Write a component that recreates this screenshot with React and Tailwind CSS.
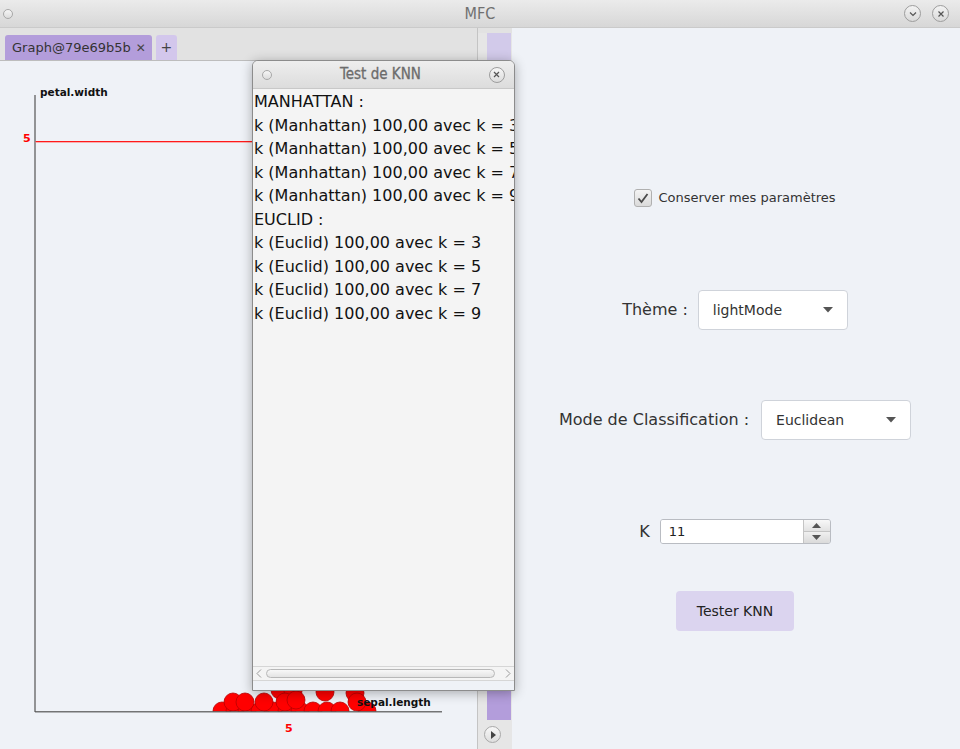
import React from 'react';

const circles = [
  [222, 711], [235, 711], [247, 711], [260, 711], [273, 711], [287, 711], [300, 711],
  [313, 711], [327, 711], [340, 711], [367, 711],
  [280, 690], [293, 691], [325, 692], [355, 693],
  [233, 702], [245, 702], [264, 702], [285, 702], [296, 700], [357, 702],
];

const lines = [
  'MANHATTAN :',
  'k (Manhattan) 100,00 avec k = 3',
  'k (Manhattan) 100,00 avec k = 5',
  'k (Manhattan) 100,00 avec k = 7',
  'k (Manhattan) 100,00 avec k = 9',
  'EUCLID :',
  'k (Euclid) 100,00 avec k = 3',
  'k (Euclid) 100,00 avec k = 5',
  'k (Euclid) 100,00 avec k = 7',
  'k (Euclid) 100,00 avec k = 9',
];

function Graph() {
  // canvas drawn in page coordinates, shifted up by the header height
  return (
    <svg width="477" height="688" className="block">
      <defs>
        <clipPath id="plot">
          <rect x="0" y="0" width="477" height="711.5" />
        </clipPath>
      </defs>
      <g transform="translate(0,-61)" fontFamily="DejaVu Sans, sans-serif">
        <rect x="34.4" y="95" width="1.2" height="617" fill="#555" />
        <text x="40" y="96" fontSize="10.5" fontWeight="bold" fill="#111">petal.width</text>
        <text x="23" y="142" fontSize="11" fontWeight="bold" fill="#ff0000">5</text>
        <rect x="35.6" y="141" width="225" height="1" fill="#ff1a1a" />
        <rect x="35.6" y="142" width="225" height="0.6" fill="#ff8080" />
        <g clipPath="url(#plot)">
          {circles.map(([cx, cy], i) => (
            <circle key={i} cx={cx} cy={cy} r="9" fill="#ff0000" stroke="#b80000" strokeWidth="0.8" />
          ))}
        </g>
        <rect x="35" y="711.2" width="407" height="1.2" fill="#555" />
        <text x="357" y="706" fontSize="10.5" fontWeight="bold" fill="#111">sepal.length</text>
        <text x="285" y="732" fontSize="11" fontWeight="bold" fill="#ff0000">5</text>
      </g>
    </svg>
  );
}

function Caret() {
  return (
    <svg width="10" height="6" viewBox="0 0 10 6">
      <path d="M0 0 L10 0 L5 5.5 Z" fill="#555" />
    </svg>
  );
}

function Select({ value }) {
  return (
    <div className="w-[150px] h-[40px] bg-white border border-[#cfd3da] rounded-[4px] flex items-center justify-between pl-[14px] pr-[14px]">
      <span className="text-[14px] text-[#333]">{value}</span>
      <Caret />
    </div>
  );
}

export default function App() {
  return (
    <div className="w-[960px] h-[749px] relative overflow-hidden bg-[#eff2f7] font-['DejaVu_Sans',sans-serif] text-[#333]">
      {/* window title bar */}
      <div className="h-[28px] flex items-center bg-gradient-to-b from-[#ebebeb] to-[#d7d7d7] border-b border-[#cacaca]">
        <div className="w-[80px] pl-[3px] flex items-center">
          <span className="w-[10px] h-[10px] rounded-full border border-[#a8a8a8] bg-gradient-to-b from-[#f6f6f6] to-[#dcdcdc]" />
        </div>
        <div className="flex-1 text-center text-[16px] text-[#707070] font-['DejaVu_Sans_Condensed','DejaVu_Sans',sans-serif] [font-stretch:condensed] leading-none">MFC</div>
        <div className="w-[80px] pr-[11px] flex items-center justify-end gap-[11px]">
          <span className="w-[17px] h-[17px] rounded-full border border-[#9d9d9d] bg-gradient-to-b from-[#f3f3f3] to-[#dadada] flex items-center justify-center">
            <svg width="8" height="6" viewBox="0 0 8 6"><path d="M1 1.5 L4 4.5 L7 1.5" fill="none" stroke="#555" strokeWidth="1.2" /></svg>
          </span>
          <span className="w-[17px] h-[17px] rounded-full border border-[#9d9d9d] bg-gradient-to-b from-[#f3f3f3] to-[#dadada] flex items-center justify-center">
            <svg width="8" height="8" viewBox="0 0 8 8"><path d="M1.5 1.5 L6.5 6.5 M6.5 1.5 L1.5 6.5" fill="none" stroke="#555" strokeWidth="1.2" /></svg>
          </span>
        </div>
      </div>

      <div className="flex h-[721px]">
        {/* left pane with tabs */}
        <div className="w-[477px] flex flex-col">
          <div className="h-[33px] bg-[#e2e2e2] border-b border-[#bdbdbd] flex items-end pl-[5px] gap-[4px]">
            <div className="h-[25px] pl-[7px] pr-[6px] bg-[#b39ddb] rounded-t-[3px] flex items-center gap-[5px] text-[13px] text-[#333]">
              <span>Graph@79e69b5b</span>
              <span className="text-[12px] text-[#444]">✕</span>
            </div>
            <div className="h-[25px] w-[21px] bg-[#d3c7ec] rounded-t-[3px] flex items-center justify-center text-[14px] text-[#444]">+</div>
          </div>
          <div className="flex-1 overflow-hidden">
            <Graph />
          </div>
        </div>

        {/* scroll strip */}
        <div className="w-[35px] border-l border-[#c4c4c4] bg-[#e6e6e6] flex flex-col">
          <div className="h-[5px] bg-[#e2e2e2]" />
          <div className="ml-[9px] w-[24px] h-[28px] bg-[#d2caea]" />
          <div className="ml-[9px] w-[24px] h-[659px] bg-[#b39ddb]" />
          <div className="flex-1 flex items-center justify-center pr-[5px]">
            <span className="w-[17px] h-[17px] rounded-full border border-[#a9a9a9] bg-gradient-to-b from-[#f7f7f7] to-[#dedede] flex items-center justify-center">
              <svg width="6" height="8" viewBox="0 0 6 8"><path d="M1 0 L6 4 L1 8 Z" fill="#444" /></svg>
            </span>
          </div>
        </div>

        {/* right settings pane */}
        <div className="flex-1 flex flex-col items-center pt-[161px] pr-[2px]">
          <div className="h-[18px] flex items-center gap-[6px]">
            <span className="w-[18px] h-[18px] rounded-[3px] border border-[#b0b0b0] bg-gradient-to-b from-[#f4f4f4] to-[#dadada] flex items-center justify-center">
              <svg width="12" height="11" viewBox="0 0 12 11"><path d="M1.5 5.5 L4.5 9 L10.5 1" fill="none" stroke="#4a4a4a" strokeWidth="1.8" /></svg>
            </span>
            <span className="text-[13px] text-[#333]">Conserver mes paramètres</span>
          </div>

          <div className="mt-[83px] h-[40px] flex items-center gap-[10px]">
            <span className="text-[16px] text-[#333]">Thème :</span>
            <Select value="lightMode" />
          </div>

          <div className="mt-[70px] h-[40px] flex items-center gap-[12px]">
            <span className="text-[16px] text-[#333]">Mode de Classification :</span>
            <Select value="Euclidean" />
          </div>

          <div className="mt-[79px] h-[25px] flex items-center gap-[10px]">
            <span className="text-[16px] text-[#333]">K</span>
            <div className="w-[171px] h-[25px] border border-[#b9bcc2] rounded-[3px] flex overflow-hidden">
              <div className="flex-1 bg-white flex items-center pl-[8px] text-[13px] text-[#222]">11</div>
              <div className="w-[27px] flex flex-col border-l border-[#c4c4c4]">
                <div className="flex-1 bg-gradient-to-b from-[#f8f8f8] to-[#e2e2e2] border-b border-[#c4c4c4] flex items-center justify-center">
                  <svg width="9" height="5" viewBox="0 0 9 5"><path d="M0 5 L9 5 L4.5 0 Z" fill="#555" /></svg>
                </div>
                <div className="flex-1 bg-gradient-to-b from-[#f0f0f0] to-[#dadada] flex items-center justify-center">
                  <svg width="9" height="5" viewBox="0 0 9 5"><path d="M0 0 L9 0 L4.5 5 Z" fill="#555" /></svg>
                </div>
              </div>
            </div>
          </div>

          <div className="mt-[47px] w-[118px] h-[40px] rounded-[4px] bg-[#dbd4ef] flex items-center justify-center text-[14px] text-[#222]">
            Tester KNN
          </div>
        </div>
      </div>

      {/* floating dialog window */}
      <div className="absolute left-[252px] top-[60px] w-[263px] h-[631px] flex flex-col border border-[#8c8c8c] rounded-t-[6px] overflow-hidden shadow-[0_2px_12px_rgba(0,0,0,0.3)] bg-[#f4f4f4]">
        <div className="h-[28px] flex items-center justify-between px-[9px] bg-gradient-to-b from-[#eeeeee] to-[#dcdcdc] border-b border-[#c8c8c8]">
          <span className="w-[10px] h-[10px] rounded-full border border-[#a8a8a8] bg-gradient-to-b from-[#f6f6f6] to-[#dcdcdc]" />
          <span className="text-[15px] text-[#6c6c6c] font-['DejaVu_Sans_Condensed','DejaVu_Sans',sans-serif] [font-stretch:condensed] leading-none [-webkit-text-stroke:0.3px_#6c6c6c]">Test de KNN</span>
          <span className="w-[16px] h-[16px] rounded-full border border-[#9d9d9d] bg-gradient-to-b from-[#f6f6f6] to-[#dcdcdc] flex items-center justify-center">
            <svg width="7" height="7" viewBox="0 0 7 7"><path d="M1 1 L6 6 M6 1 L1 6" fill="none" stroke="#555" strokeWidth="1.2" /></svg>
          </span>
        </div>
        <div className="flex-1 overflow-hidden bg-[#f4f4f4] pl-[1px] pt-[1px]">
          {lines.map((l, i) => (
            <div key={i} className="h-[23.5px] leading-[23.5px] text-[16px] text-[#111] whitespace-nowrap">{l}</div>
          ))}
        </div>
        <div className="h-[14px] bg-[#f4f4f4] border-t border-[#d6d6d6] flex items-center px-[3px] gap-[4px]">
          <svg width="6" height="9" viewBox="0 0 6 9"><path d="M5 0.5 L1 4.5 L5 8.5" fill="none" stroke="#999" strokeWidth="1" /></svg>
          <div className="flex-1 h-[9px] rounded-full border border-[#b8b8b8] bg-gradient-to-b from-[#f8f8f8] to-[#e4e4e4]" />
          <svg width="6" height="9" viewBox="0 0 6 9" className="ml-[6px]"><path d="M1 0.5 L5 4.5 L1 8.5" fill="none" stroke="#999" strokeWidth="1" /></svg>
        </div>
        <div className="h-[10px] bg-[#eff2f7] border-t border-[#d6d6d6]" />
      </div>
    </div>
  );
}
